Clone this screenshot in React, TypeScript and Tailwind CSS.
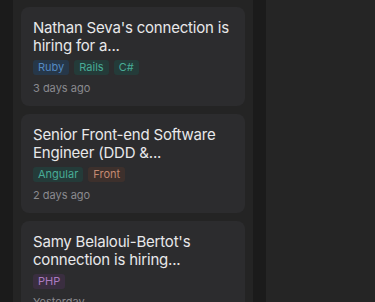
import React from 'react';

type Tag = { label: string; tone: 'blue' | 'teal' | 'brown' | 'purple' };

type Job = {
  id: number;
  title: string;
  tags: Tag[];
  posted: string;
};

const TAG_STYLES: Record<Tag['tone'], string> = {
  blue: 'bg-[#263749] text-[#5489c2]',
  teal: 'bg-[#243b39] text-[#48ab96]',
  brown: 'bg-[#3d302c] text-[#c48a72]',
  purple: 'bg-[#3a2e40] text-[#ab7bc2]',
};

const JOBS: Job[] = [
  {
    id: 1,
    title: "Nathan Seva's connection is hiring for a...",
    tags: [
      { label: 'Ruby', tone: 'blue' },
      { label: 'Rails', tone: 'teal' },
      { label: 'C#', tone: 'teal' },
    ],
    posted: '3 days ago',
  },
  {
    id: 2,
    title: 'Senior Front-end Software Engineer (DDD &...',
    tags: [
      { label: 'Angular', tone: 'teal' },
      { label: 'Front', tone: 'brown' },
    ],
    posted: '2 days ago',
  },
  {
    id: 3,
    title: "Samy Belaloui-Bertot's connection is hiring...",
    tags: [{ label: 'PHP', tone: 'purple' }],
    posted: 'Yesterday',
  },
];

function JobCard({ job }: { job: Job }) {
  return (
    <div className="rounded-lg bg-[#2c2c2e] px-3 pt-3 pb-[10px]">
      <h3 className="text-[15px] leading-[18px] tracking-[-0.2px] text-[#e8e8ea]">{job.title}</h3>
      <div className="mt-[5px] flex flex-wrap gap-[5px]">
        {job.tags.map((tag) => (
          <span
            key={tag.label}
            className={`rounded-[3px] px-[5px] text-[11px] leading-[15px] ${TAG_STYLES[tag.tone]}`}
          >
            {tag.label}
          </span>
        ))}
      </div>
      <p className="mt-[5px] text-[11px] leading-[16px] text-[#8a8a8e]">{job.posted}</p>
    </div>
  );
}

export default function App() {
  return (
    <div
      className="flex h-[302px] w-[375px] gap-[13px] overflow-hidden bg-[#1b1b1b] pl-[13px]"
      style={{ fontFamily: 'Inter, "Noto Sans", sans-serif' }}
    >
      <div className="flex w-[240px] shrink-0 flex-col gap-2 bg-[#242424] px-2 pt-[7px]">
        {JOBS.map((job) => (
          <JobCard key={job.id} job={job} />
        ))}
      </div>
      <div className="w-[240px] shrink-0 bg-[#252525]" />
    </div>
  );
}
